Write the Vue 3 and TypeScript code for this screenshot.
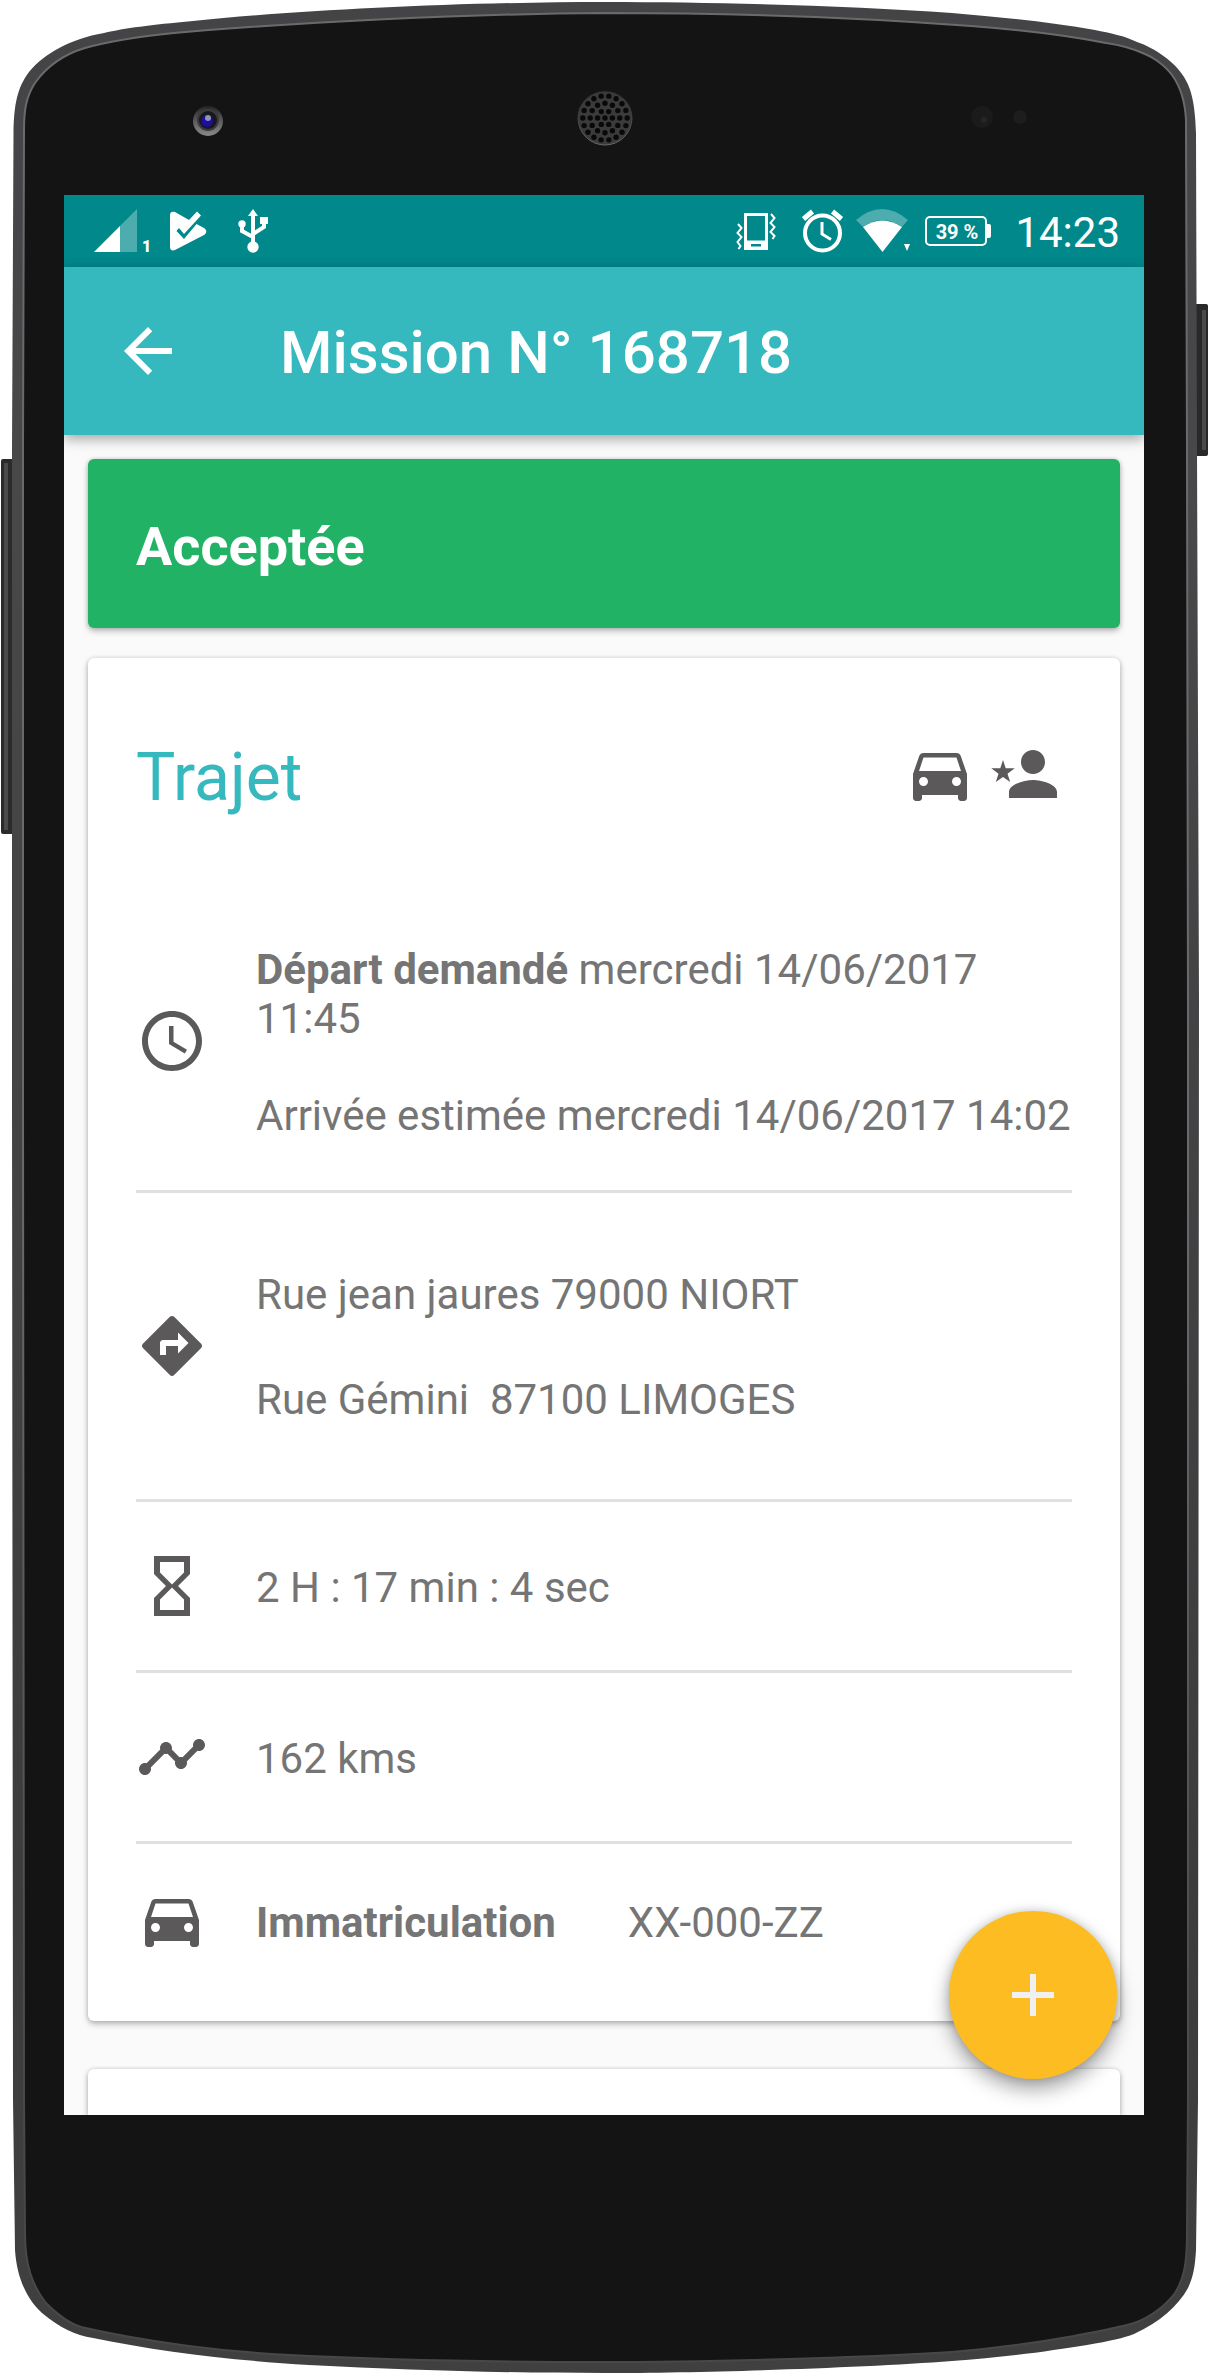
<script setup lang="ts">
import { ref } from 'vue'

const CAR =
  'M18.92 6.01C18.72 5.42 18.16 5 17.5 5h-11c-.66 0-1.21.42-1.42 1.01L3 12v8c0 .55.45 1 1 1h1c.55 0 1-.45 1-1v-1h12v1c0 .55.45 1 1 1h1c.55 0 1-.45 1-1v-8l-2.08-5.99zM6.5 16c-.83 0-1.5-.67-1.5-1.5S5.67 13 6.5 13s1.5.67 1.5 1.5S7.33 16 6.5 16zm11 0c-.83 0-1.5-.67-1.5-1.5s.67-1.5 1.5-1.5 1.5.67 1.5 1.5-.67 1.5-1.5 1.5zM5 11l1.5-4.5h11L19 11H5z'
const CLOCK =
  'M11.99 2C6.47 2 2 6.48 2 12s4.47 10 9.99 10C17.52 22 22 17.52 22 12S17.52 2 11.99 2zM12 20c-4.42 0-8-3.58-8-8s3.58-8 8-8 8 3.58 8 8-3.58 8-8 8zm.5-13H11v6l5.25 3.15.75-1.23-4.5-2.67z'
const DIRECTIONS =
  'M21.71 11.29l-9-9c-.39-.39-1.02-.39-1.41 0l-9 9c-.39.39-.39 1.02 0 1.41l9 9c.39.39 1.02.39 1.41 0l9-9c.39-.38.39-1.01 0-1.41zM14 14.5V12h-4v3H8v-4c0-.55.45-1 1-1h5V7.500l3.500 3.500-3.500 3.500z'
const HOURGLASS =
  'M6 2v6h.01L6 8.010 10 12l-4 4 .01.010H6V22h12v-5.990h-.01L18 16l-4-4 4-3.990-.01-.010H18V2H6zm10 14.500V20H8v-3.500l4-4 4 4zm-4-5l-4-4V4h8v3.500l-4 4z'
const TIMELINE =
  'M23 8c0 1.100-.9 2-2 2-.18 0-.35-.02-.51-.07l-3.560 3.550c.05.16.07.34.07.52 0 1.100-.9 2-2 2s-2-.9-2-2c0-.18.02-.36.07-.52l-2.550-2.550c-.16.05-.34.07-.52.07s-.36-.02-.52-.07l-4.550 4.560c.05.16.07.33.07.51 0 1.100-.9 2-2 2s-2-.9-2-2 .9-2 2-2c.18 0 .35.02.51.07l4.560-4.550C8.020 9.360 8 9.180 8 9c0-1.100.9-2 2-2s2 .9 2 2c0 .18-.02.36-.07.52l2.550 2.550c.16-.05.34-.07.52-.07s.36.02.52.07l3.550-3.560C19.020 8.350 19 8.180 19 8c0-1.100.9-2 2-2s2 .9 2 2z'

interface Part {
  text: string
  bold?: boolean
}
interface Row {
  id: string
  icon: string
  lines: Part[][]
}

const rows = ref<Row[]>([
  {
    id: 'times',
    icon: CLOCK,
    lines: [
      [{ text: 'Départ demandé', bold: true }, { text: ' mercredi 14/06/2017 ' }, { text: '11:45' }],
      [{ text: 'Arrivée estimée mercredi 14/06/2017 14:02' }],
    ],
  },
  {
    id: 'route',
    icon: DIRECTIONS,
    lines: [[{ text: 'Rue jean jaures 79000 NIORT' }], [{ text: 'Rue Gémini  87100 LIMOGES' }]],
  },
  { id: 'duration', icon: HOURGLASS, lines: [[{ text: '2 H : 17 min : 4 sec' }]] },
  { id: 'distance', icon: TIMELINE, lines: [[{ text: '162 kms' }]] },
])

// Speaker grille: a centre hole surrounded by concentric rings.
const holes = [0, 1, 2, 3].flatMap((ring) => {
  const count = ring === 0 ? 1 : ring * 6
  return Array.from({ length: count }, (_, i) => {
    const a = (i / count) * Math.PI * 2
    return { x: 605 + Math.cos(a) * ring * 7.4, y: 118 + Math.sin(a) * ring * 7.4 }
  })
})
</script>

<template>
  <div class="device">
    <svg class="shell" viewBox="0 0 1210 2375" preserveAspectRatio="none" aria-hidden="true">
      <defs>
        <linearGradient id="rim" x1="0" y1="0" x2="0" y2="1">
          <stop offset="0" stop-color="#444446" />
          <stop offset="0.2" stop-color="#48484a" />
          <stop offset="0.8" stop-color="#3c3c3d" />
          <stop offset="1" stop-color="#404040" />
        </linearGradient>
        <linearGradient id="line" x1="0" y1="0" x2="0" y2="1">
          <stop offset="0" stop-color="#6a6a6b" />
          <stop offset="0.5" stop-color="#6a6a6b" />
          <stop offset="0.9" stop-color="#48484a" />
        </linearGradient>
        <linearGradient id="lens" x1="0" y1="0" x2="0" y2="1">
          <stop offset="0" stop-color="#242426" />
          <stop offset="0.5" stop-color="#5c5c5e" />
          <stop offset="1" stop-color="#8a8a8a" />
        </linearGradient>
        <linearGradient id="grille" x1="0" y1="0" x2="0" y2="1">
          <stop offset="0" stop-color="#1e1e1e" />
          <stop offset="1" stop-color="#6a6a6a" />
        </linearGradient>
      </defs>
      <rect x="1" y="459" width="14" height="375" rx="2" fill="#2b2b2c" />
      <rect x="4" y="463" width="4" height="367" fill="#4a4a4b" />
      <rect x="1194" y="304" width="14" height="152" rx="2" fill="#29292a" />
      <rect x="1202" y="310" width="4" height="140" fill="#4a4a4b" />
      <path
        fill="url(#rim)"
        d="M605 2C463 2 300 10 193 21C150 25 125 28 104 33C70 39 45 53 29 72C17 88 14 105 13.500 133L12 450L12 1100L13 2100L15 2250C17 2280 28 2300 42 2313C60 2328 75 2335 93 2338C160 2352 240 2361 309 2365C410 2370 500 2373 605 2373C700 2373 860 2368 952 2361C1000 2358 1050 2351 1087 2345C1110 2341 1124 2338 1134 2334C1160 2322 1178 2306 1188 2288C1194 2275 1195 2265 1196 2250L1198 2100L1199 1000L1197 450L1196 133C1195 105 1192 90 1184 77C1175 62 1155 48 1137 42C1125 36 1110 33 1095 30C1050 22 1000 17 952 13C850 6 720 2 605 2Z"
      />
      <path
        fill="#141414"
        stroke="url(#line)"
        stroke-width="2"
        d="M605 13C463 14 300 22 174 33C135 37 110 41 85 48C65 54 47 66 35 83C26 97 24 110 24 130L23 450L23 1100L24 2100L25 2233C25 2265 32 2285 46 2303C58 2315 68 2323 81 2327C150 2343 230 2352 289 2355C390 2360 500 2362 605 2362C700 2362 860 2358 952 2352C1000 2348 1040 2342 1068 2337C1095 2332 1118 2328 1134 2323C1150 2318 1166 2305 1175 2293C1185 2277 1187 2260 1187 2233L1188 2100L1188 1000L1187 450L1186 120C1185 100 1180 86 1172 75C1163 63 1150 56 1145 54C1130 47 1120 45 1106 43C1060 34 1010 29 971 26C850 17 720 13 605 13Z"
      />
      <circle cx="208" cy="121" r="15" fill="url(#lens)" />
      <circle cx="208" cy="120" r="11" fill="#3c3c3e" />
      <circle cx="208" cy="120" r="9" fill="#18181c" />
      <circle cx="207" cy="121" r="6" fill="#1c0f9c" />
      <circle cx="208" cy="118" r="3" fill="#8f93b4" />
      <circle cx="605" cy="118" r="27" fill="#3b3b3b" stroke="url(#grille)" stroke-width="1" />
      <circle v-for="(h, i) in holes" :key="i" :cx="h.x" :cy="h.y" r="2.700" fill="#090909" />
      <circle cx="982" cy="117" r="11" fill="#1b1b1b" />
      <circle cx="984" cy="120" r="3" fill="#262626" />
      <circle cx="1020" cy="117" r="7" fill="#1d1d1d" />
    </svg>

    <div class="screen">
      <div class="status">
        <div class="group">
          <svg class="signal" width="44" height="44" viewBox="0 0 44 44" aria-hidden="true">
            <path d="M43 0V43H26V17Z" fill="#4dacae" />
            <path d="M0 43L26 17V43Z" fill="#fff" />
          </svg>
          <span class="sim">1</span>
          <svg class="play" width="38" height="44" viewBox="0 0 38 44" aria-hidden="true">
            <path
              fill="#fff"
              d="M0 6C0 3 2 2 5 3L19 11L27 2.500L31 6.500L14 25L9 19L6.500 22L14 30L26.500 15L34 19C37 21 37 24 34 26L5 41C2 42 0 41 0 38Z"
            />
          </svg>
          <svg class="usb" width="32" height="46" viewBox="0 0 32 46" fill="none" stroke="#fff" stroke-width="4" aria-hidden="true">
            <path d="M15 38V7M15 29L4 23V16M15 26L26 19V13" />
            <path d="M15 1L20 8H10Z" fill="#fff" stroke="none" />
            <circle cx="15" cy="39" r="5.700" fill="#fff" stroke="none" />
            <circle cx="4" cy="16" r="3.700" fill="#fff" stroke="none" />
            <path d="M22 9h8v7h-8z" fill="#fff" stroke="none" />
          </svg>
        </div>
        <div class="group">
          <svg width="42" height="44" viewBox="0 0 42 44" fill="none" stroke="#fff" aria-hidden="true">
            <path d="M10.500 5.500H31.500V33H10.500Z" stroke-width="3" />
            <path d="M9 32H33V41H9ZM16 35V37.500H26V35Z" fill="#fff" fill-rule="evenodd" stroke="none" />
            <path d="M3 15L6.500 19L2.500 24L6.500 28L2.500 33L5.500 37L3.500 40M36 5L39.500 9L35.500 14L39.500 18L35.500 23L39.500 27L37.500 30" stroke-width="2" />
          </svg>
          <svg class="alarm" width="44" height="46" viewBox="0 0 44 46" fill="none" stroke="#fff" aria-hidden="true">
            <circle cx="21.500" cy="25" r="17.500" stroke-width="4" />
            <path d="M21 14V26L30 31.500" stroke-width="3" />
            <path d="M2.500 11L11.500 3.500M31.500 3.500L40.500 11" stroke-width="5" />
          </svg>
          <svg class="wifi" width="56" height="44" viewBox="0 0 56 44" aria-hidden="true">
            <path d="M1 11Q27 -11 53 11L47 18Q27 4 8 18Z" fill="#4dacae" />
            <path d="M8 18Q27 5 47 18L27.500 43Z" fill="#fff" />
            <path d="M49 35H55L52 42Z" fill="#fff" />
          </svg>
          <svg class="battery" width="66" height="30" viewBox="0 0 66 30" role="img" aria-label="39 %">
            <rect x="1" y="1" width="60" height="28" rx="4" fill="none" stroke="#fff" stroke-width="2" />
            <path d="M61 8H64Q66 8 66 10V20Q66 22 64 22H61Z" fill="#fff" />
            <text x="32" y="23" text-anchor="middle">39 %</text>
          </svg>
          <time class="clock">14:23</time>
        </div>
      </div>

      <header class="toolbar">
        <button class="back" type="button" aria-label="Retour">
          <svg class="icon" viewBox="0 0 24 24" fill="#fff">
            <path d="M20 11H7.830l5.590-5.590L12 4l-8 8 8 8 1.410-1.410L7.830 13H20v-2z" />
          </svg>
        </button>
        <h1>Mission N° 168718</h1>
      </header>

      <main class="content">
        <section class="card banner">Acceptée</section>

        <section class="card trip">
          <div class="head">
            <h2>Trajet</h2>
            <div class="badges">
              <svg class="icon" viewBox="0 0 24 24" aria-hidden="true"><path :d="CAR" /></svg>
              <svg class="icon" viewBox="0 0 24 24" aria-hidden="true">
                <path d="M15 12c2.210 0 4-1.790 4-4s-1.790-4-4-4-4 1.790-4 4 1.790 4 4 4zm0 2c-2.670 0-8 1.340-8 4v2h16v-2c0-2.660-5.330-4-8-4z" />
                <path d="M5 7.300L5.900 10.100H8.900L6.500 11.900L7.400 14.700L5 13L2.600 14.700L3.500 11.900L1.100 10.100H4.100Z" />
              </svg>
            </div>
          </div>

          <div v-for="row in rows" :key="row.id" class="row" :class="row.id">
            <svg class="icon" viewBox="0 0 24 24" aria-hidden="true"><path :d="row.icon" /></svg>
            <div class="lines">
              <p v-for="(line, i) in row.lines" :key="i"><component :is="part.bold ? 'b' : 'span'" v-for="(part, j) in line" :key="j">{{ part.text }}</component></p>
            </div>
          </div>
          <div class="row plate">
            <svg class="icon" viewBox="0 0 24 24" aria-hidden="true"><path :d="CAR" /></svg>
            <dl>
              <dt>Immatriculation</dt>
              <dd>XX-000-ZZ</dd>
            </dl>
          </div>
        </section>

        <section class="card next"></section>
      </main>

      <button class="fab" type="button" aria-label="Ajouter">
        <svg class="icon" viewBox="0 0 24 24"><path d="M19 13h-6v6h-2v-6H5v-2h6V5h2v6h6v2z" /></svg>
      </button>
    </div>
  </div>
</template>

<style>
body {
  margin: 0;
  background: #fff;
}
</style>

<style scoped>
.device {
  position: relative;
  box-sizing: border-box;
  padding: 195px 66px 260px 64px;
  font-family: Roboto, 'Liberation Sans', sans-serif;
  font-size: 42px;
  line-height: 49px;
  color: #757575;
}
.shell {
  position: absolute;
  inset: 0;
  width: 100%;
  height: 100%;
}
.screen {
  position: relative;
  overflow: hidden;
  background: #fafafa;
}
.icon {
  display: block;
  flex: none;
  width: 72px;
  height: 72px;
  fill: #5b595a;
}
button {
  padding: 0;
  border: 0;
  background: none;
  cursor: pointer;
}

.status {
  display: flex;
  justify-content: space-between;
  height: 72px;
  padding: 0 24px 0 30px;
  background: #00888b;
  color: #fff;
}
.group {
  display: flex;
  align-items: center;
}
.group svg {
  display: block;
  flex: none;
}
.sim {
  align-self: flex-end;
  margin: 0 18px 10px 4px;
  width: 10px;
  font-size: 16px;
  font-weight: 900;
  line-height: 20px;
}
.usb {
  margin-left: 30px;
}
.alarm {
  margin-left: 24px;
}
.wifi {
  margin-left: 10px;
}
.battery {
  margin: 0 24px 0 14px;
}
.battery text {
  fill: #fff;
  font-size: 20px;
  font-weight: 700;
}
.clock {
  padding-top: 2px;
}

.toolbar {
  position: relative;
  display: flex;
  align-items: center;
  gap: 96px;
  height: 168px;
  padding: 0 48px;
  background: #35b8be;
  box-shadow: 0 4px 12px rgba(0, 0, 0, 0.35);
}
.toolbar .icon {
  fill: #fff;
}
h1 {
  margin: 0;
  padding-top: 4px;
  color: #fff;
  font-size: 60px;
  font-weight: 500;
  line-height: 72px;
}

.content {
  padding: 24px 24px 0;
}
.card {
  border-radius: 6px;
  background: #fff;
  box-shadow: 0 3px 6px rgba(0, 0, 0, 0.26), 0 0 4px rgba(0, 0, 0, 0.14);
}
.banner {
  padding: 56px 48px 49px;
  background: #22b266;
  color: #fff;
  font-size: 54px;
  font-weight: 700;
  line-height: 64px;
}
.trip {
  margin-top: 30px;
  padding: 0 48px 25px;
}
.head {
  display: flex;
  align-items: center;
  justify-content: space-between;
  height: 234px;
  box-sizing: border-box;
  padding: 0 12px 3px 0;
}
h2 {
  margin: 0;
  padding-top: 8px;
  color: #35b8be;
  font-size: 66px;
  font-weight: 400;
  line-height: 78px;
}
.badges {
  display: flex;
  gap: 12px;
}
.row {
  display: flex;
  align-items: center;
  gap: 48px;
  min-height: 168px;
  border-bottom: 3px solid #e0e0e0;
}
.row.times {
  min-height: 298px;
}
.row.route {
  min-height: 306px;
}
.row.plate {
  min-height: 152px;
  border-bottom: 0;
}
.lines {
  display: flex;
  flex: 1;
  flex-direction: column;
  gap: 48px;
  padding-top: 2px;
}
.route .lines {
  gap: 56px;
}
p {
  margin: 0;
  white-space: pre-wrap;
}
dl {
  display: flex;
  gap: 72px;
  margin: 0;
  padding-top: 4px;
}
dt {
  font-weight: 700;
}
dd {
  margin: 0;
}
.next {
  height: 46px;
  margin-top: 48px;
  border-radius: 6px 6px 0 0;
}
.fab {
  position: absolute;
  right: 27px;
  bottom: 36px;
  display: flex;
  align-items: center;
  justify-content: center;
  width: 168px;
  height: 168px;
  border-radius: 50%;
  background: #fcbc22;
  box-shadow: 0 10px 20px rgba(0, 0, 0, 0.36), 0 0 10px rgba(0, 0, 0, 0.16);
}
.fab .icon {
  fill: #f0f0f0;
}
</style>
